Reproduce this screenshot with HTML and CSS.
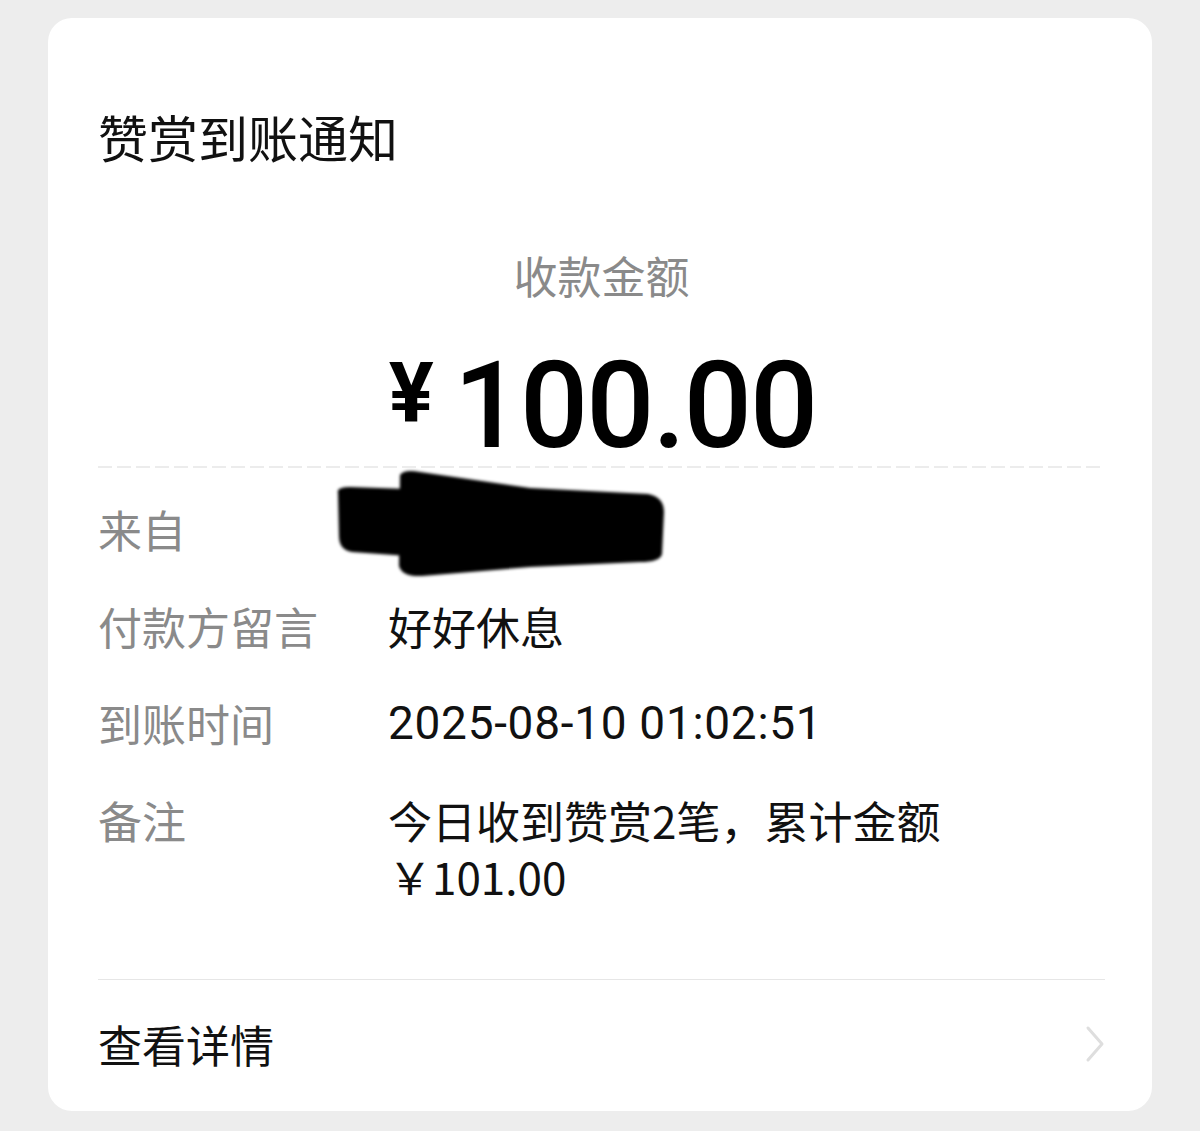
FILE: index.html
```html
<!DOCTYPE html>
<html lang="zh-CN">
<head>
<meta charset="utf-8">
<title>赞赏到账通知</title>
<link rel="stylesheet" href="styles.css">
</head>
<body>
<div class="card">
  <div class="title">赞赏到账通知</div>
  <div class="amount-label">收款金额</div>
  <div class="amount">
    <span class="yen">¥</span><span class="num">100.00</span>
  </div>
  <div class="dashed"></div>
  <div class="rows">
    <div class="row">
      <div class="label">来自</div>
      <div class="value redacted-wrap">
        <svg class="redact" width="340" height="115" viewBox="0 0 340 115">
          <defs><filter id="bl" x="-10%" y="-10%" width="120%" height="120%"><feGaussianBlur stdDeviation="1.8"/></filter></defs>
          <g fill="#000" filter="url(#bl)">
            <path d="M 8 27 Q 6 21 20 21 L 78 23 L 78 90 L 22 86 Q 9 84 9 70 Z"/>
            <path d="M 70 9 Q 74 3 90 6 L 200 22 L 318 28 Q 334 31 334 46 L 332 88 Q 330 96 310 96 L 200 101 L 92 110 Q 72 111 69 100 Z"/>
          </g>
        </svg>
      </div>
    </div>
    <div class="row">
      <div class="label">付款方留言</div>
      <div class="value">好好休息</div>
    </div>
    <div class="row">
      <div class="label">到账时间</div>
      <div class="value date">2025-08-10 01:02:51</div>
    </div>
    <div class="row">
      <div class="label">备注</div>
      <div class="value">今日收到赞赏2笔，累计金额<br>￥101.00</div>
    </div>
  </div>
  <div class="divider"></div>
  <div class="detail">
    <span>查看详情</span>
    <svg class="chev" width="24" height="40" viewBox="0 0 24 40"><path d="M5 4 L19 20 L5 36" fill="none" stroke="#dedede" stroke-width="3" stroke-linecap="round" stroke-linejoin="round"/></svg>
  </div>
</div>
</body>
</html>
```
FILE: styles.css
```css
html, body {
  margin: 0;
  padding: 0;
  background: #ededed;
}
body {
  padding: 18px 48px 21px;
  font-family: "Noto Sans CJK SC", "Noto Sans", sans-serif;
  color: #111;
}
.card {
  background: #fff;
  border-radius: 24px;
  padding: 88px 47px 39px 50px;
  display: flex;
  flex-direction: column;
}
.title {
  font-size: 50px;
  line-height: 60px;
  color: #111;
}
.amount-label {
  margin-top: 79px;
  text-align: center;
  font-size: 44px;
  line-height: 60px;
  color: #8a8a8a;
}
.amount {
  margin-top: 41px;
  display: flex;
  justify-content: center;
  align-items: flex-start;
  font-family: Roboto, "Noto Sans", sans-serif;
  color: #000;
  padding-left: 2px;
}
.yen {
  font-size: 84px;
  line-height: 84px;
  font-weight: 700;
  margin-top: 6px;
  margin-right: 20px;
}
.num {
  font-size: 120px;
  line-height: 120px;
  font-weight: 500;
  letter-spacing: -2px;
}
.dashed {
  height: 2px;
  background: repeating-linear-gradient(90deg, #ececec 0 14px, transparent 14px 19px);
}
.rows {
  margin-top: 33px;
  display: flex;
  flex-direction: column;
  gap: 41px;
}
.row {
  display: flex;
  font-size: 44px;
  line-height: 56px;
}
.label {
  width: 290px;
  flex: none;
  color: #8a8a8a;
}
.value {
  flex: 1;
  color: #111;
}
.date {
  font-family: Roboto, "Noto Sans", sans-serif;
  font-size: 46px;
  letter-spacing: 0.7px;
}
.redacted-wrap {
  position: relative;
  min-height: 56px;
}
.redact {
  position: absolute;
  left: -58px;
  top: -35px;
}
.divider {
  margin-top: 75px;
  height: 1px;
  background: #e6e6e6;
}
.detail {
  margin-top: 36px;
  display: flex;
  justify-content: space-between;
  align-items: center;
  font-size: 44px;
  line-height: 56px;
  color: #111;
}
.chev {
  margin-right: -2px;
}
```
